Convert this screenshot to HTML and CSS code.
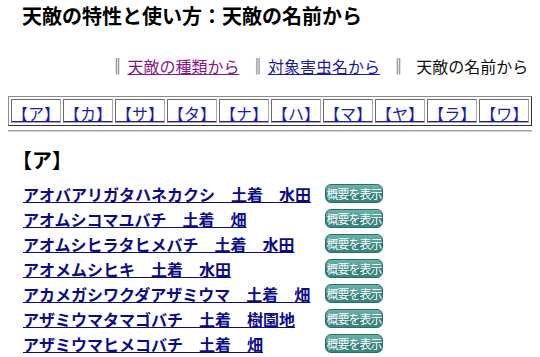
FILE: index.html
```html
<!DOCTYPE html>
<html lang="ja">
<head>
<meta charset="utf-8">
<title>天敵の特性と使い方：天敵の名前から</title>
<link rel="stylesheet" href="styles.css">
</head>
<body>
<div class="page">
  <h1 class="title">天敵の特性と使い方：天敵の名前から</h1>
  <div class="nav">
    <span class="bar">║</span><a class="nav-link visited" href="#">天敵の種類から</a>
    <span class="bar">║</span><a class="nav-link" href="#">対象害虫名から</a>
    <span class="bar">║</span><span class="current">天敵の名前から</span>
  </div>
  <table class="kana">
    <tr>
      <td><a href="#">【ア】</a></td>
      <td><a href="#">【カ】</a></td>
      <td><a href="#">【サ】</a></td>
      <td><a href="#">【タ】</a></td>
      <td><a href="#">【ナ】</a></td>
      <td><a href="#">【ハ】</a></td>
      <td><a href="#">【マ】</a></td>
      <td><a href="#">【ヤ】</a></td>
      <td><a href="#">【ラ】</a></td>
      <td><a href="#">【ワ】</a></td>
    </tr>
  </table>
  <hr class="rule">
  <h2 class="section">【ア】</h2>
  <div class="list">
    <a class="item" href="#">アオバアリガタハネカクシ　土着　水田</a><span class="btn">概要を表示</span>
    <a class="item" href="#">アオムシコマユバチ　土着　畑</a><span class="btn">概要を表示</span>
    <a class="item" href="#">アオムシヒラタヒメバチ　土着　水田</a><span class="btn">概要を表示</span>
    <a class="item" href="#">アオメムシヒキ　土着　水田</a><span class="btn">概要を表示</span>
    <a class="item" href="#">アカメガシワクダアザミウマ　土着　畑</a><span class="btn">概要を表示</span>
    <a class="item" href="#">アザミウマタマゴバチ　土着　樹園地</a><span class="btn">概要を表示</span>
    <a class="item" href="#">アザミウマヒメコバチ　土着　畑</a><span class="btn">概要を表示</span>
  </div>
</div>
</body>
</html>
```

FILE: styles.css
```css
html, body {
  margin: 0;
  padding: 0;
  background: #ffffff;
}
body {
  font-family: "Noto Sans CJK JP", "Noto Sans", sans-serif;
  color: #000;
  overflow: hidden;
}
.page {
  padding: 0 8px;
}
.title {
  margin: 0;
  padding-left: 14px;
  font-size: 20px;
  font-weight: bold;
  line-height: 32px;
}
.nav {
  margin-top: 22px;
  padding-left: 105px;
  font-size: 16px;
  line-height: 24px;
  display: flex;
  align-items: center;
  white-space: nowrap;
}
.nav > * {
  flex-shrink: 0;
}
.bar {
  font-family: "DejaVu Sans", sans-serif;
  color: #8a8a8a;
  font-size: 14px;
  margin-right: 6px;
}
.nav-link {
  color: #1a1aa6;
  margin-right: 14px;
}
.nav-link.visited {
  color: #8a168a;
}
.current {
  color: #111;
  margin-left: 8px;
}
.kana {
  margin-top: 18px;
  width: 100%;
  border-collapse: separate;
  border-spacing: 2px;
  border: 1px solid;
  border-color: #8c8c8c #333 #333 #8c8c8c;
}
.kana td {
  border: 1px solid;
  border-color: #6a6a6a #a8a8a8 #a8a8a8 #6a6a6a;
  padding: 5px 0 0 0;
  height: 17px;
  line-height: 17px;
  font-size: 16px;
  text-align: center;
}
.kana a {
  color: #1c1cb0;
}
.rule {
  margin: 4px 0 0 0;
  border: 0;
  border-top: 1px solid #a0a0a0;
  border-bottom: 1px solid #d4d4d4;
  height: 0;
}
.section {
  margin: 14px 0 0 0;
  padding-left: 4px;
  font-size: 20px;
  font-weight: bold;
  line-height: 28px;
}
.list {
  margin-top: 7px;
  padding-left: 15px;
  display: grid;
  grid-template-columns: 302px 60px;
  grid-auto-rows: 25px;
  align-items: center;
}
.item {
  color: #0c0c8a;
  font-weight: bold;
  font-size: 16px;
  line-height: 20px;
  justify-self: start;
}
.btn {
  display: inline-block;
  width: 58px;
  height: 19px;
  box-sizing: border-box;
  border-radius: 6px;
  border: 1px solid #2a6e6a;
  background: linear-gradient(#6bb3ab 0%, #4f9a94 45%, #2f7d77 55%, #3a8a84 100%);
  color: #fff;
  font-size: 12px;
  letter-spacing: -1px;
  line-height: 17px;
  text-align: center;
  white-space: nowrap;
  overflow: hidden;
  justify-self: start;
}
```
